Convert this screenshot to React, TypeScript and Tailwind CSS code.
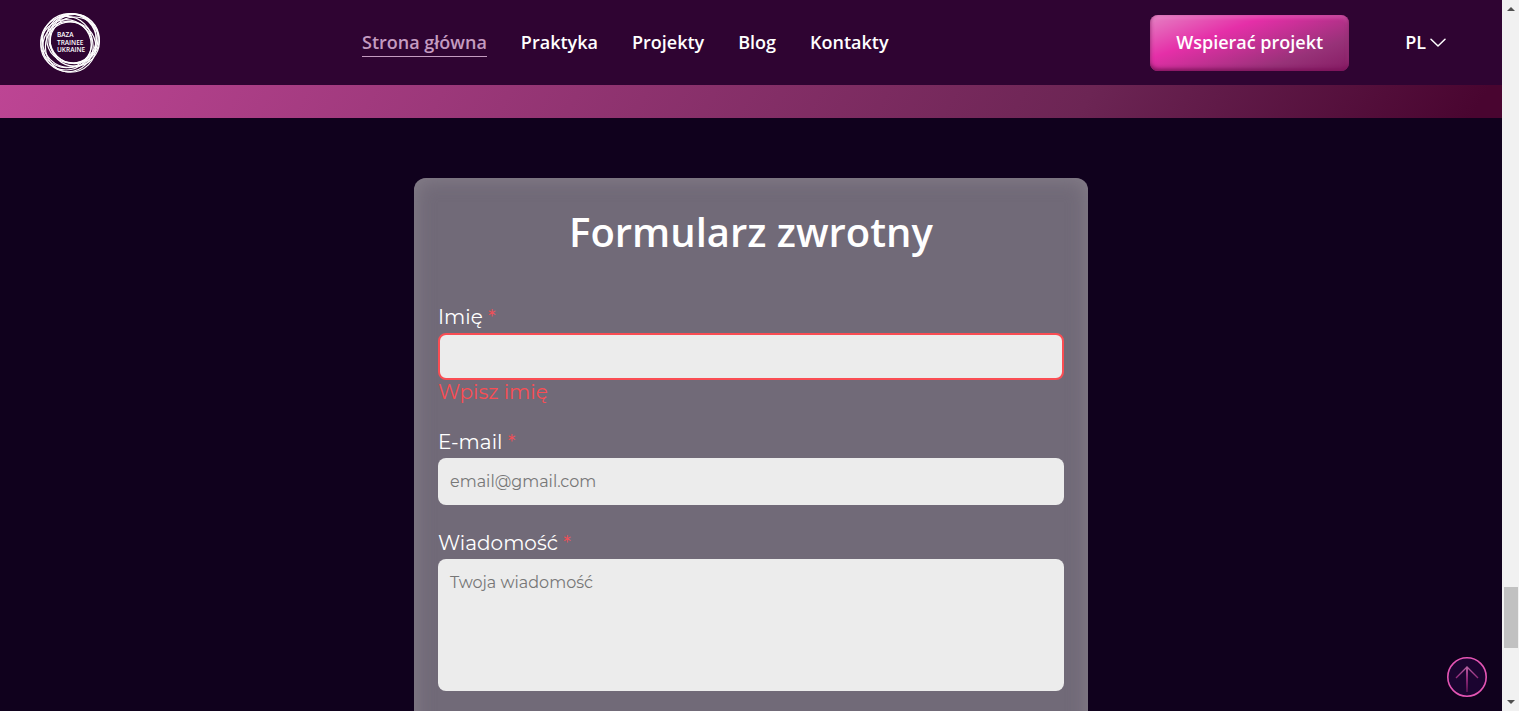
import type { ReactNode } from "react";

const navItems = ["Praktyka", "Projekty", "Blog", "Kontakty"];

const rings = [
  { cx: 34.6, cy: 26, r: 24.6 },
  { cx: 33.4, cy: 25.4, r: 24.6 },
  { cx: 31.5, cy: 25.4, r: 24.8 },
  { cx: 34.8, cy: 28.6, r: 24.6 },
  { cx: 29.4, cy: 27.6, r: 27 },
  { cx: 26.4, cy: 29, r: 25.6 },
  { cx: 26, cy: 31.8, r: 25.2 },
  { cx: 28, cy: 33.6, r: 25.2 },
  { cx: 30.6, cy: 34, r: 25.2 },
];

function Logo() {
  return (
    <a href="#home" aria-label="Baza Trainee Ukraine" className="block shrink-0">
      <svg width="60" height="60" viewBox="0 0 60 60" fill="none">
        {rings.map((ring, index) => (
          <circle key={index} {...ring} stroke="#fff" strokeWidth="1.2" />
        ))}
        <g
          fill="#fff"
          fontFamily="'Open Sans', sans-serif"
          fontWeight="600"
          fontSize="6.5"
        >
          <text x="17" y="24">BAZA</text>
          <text x="17" y="31.5">TRAINEE</text>
          <text x="17" y="39">UKRAINE</text>
        </g>
      </svg>
    </a>
  );
}

function Header() {
  return (
    <header className="flex h-[85px] shrink-0 items-center bg-[#2f0432] pr-14 pl-10 text-lg font-semibold text-white">
      <Logo />
      <nav className="ml-[262px] flex items-start gap-[34px]">
        <a
          href="#home"
          className="border-b border-[#c49bc0] leading-7 text-[#c49bc0]"
        >
          Strona główna
        </a>
        {navItems.map((item) => (
          <a key={item} href={`#${item.toLowerCase()}`} className="leading-7">
            {item}
          </a>
        ))}
      </nav>
      <button
        type="button"
        className="ml-auto h-14 rounded-lg bg-[linear-gradient(160deg,#e583c4_0%,#e52fa8_34%,#973278_75%,#861c64_100%)] px-[26px] pb-0.5 shadow-[inset_0_-2px_4px_#7a1058,inset_0_2px_4px_#f29bd466]"
      >
        Wspierać projekt
      </button>
      <button type="button" className="ml-14 flex items-center gap-1 pb-0.5">
        PL
        <svg width="16" height="10" viewBox="0 0 16 10" fill="none">
          <path
            d="M1 2.2 8 9l7-6.8"
            stroke="#fff"
            strokeWidth="1.5"
            strokeLinecap="round"
            strokeLinejoin="round"
          />
        </svg>
      </button>
    </header>
  );
}

function Label({ htmlFor, children }: { htmlFor: string; children: ReactNode }) {
  return (
    <label htmlFor={htmlFor} className="block pb-0.5 text-xl leading-7 text-white">
      {children} <span className="text-[#f04f57]">*</span>
    </label>
  );
}

function FeedbackForm() {
  return (
    <form
      noValidate
      className="mx-auto w-full max-w-[674px] rounded-xl bg-[#716a78] px-6 pt-6 pb-16 shadow-[inset_0_0_20px_#8d8690cc]"
    >
      <h2 className="text-center text-[40px] leading-[60px] font-semibold text-white">
        Formularz zwrotny
      </h2>
      <div className="mt-[41px] flex flex-col gap-6 font-['Montserrat','DejaVu_Sans',sans-serif]">
        <div>
          <Label htmlFor="name">Imię</Label>
          <input
            id="name"
            type="text"
            aria-invalid="true"
            aria-describedby="name-error"
            className="block h-[47px] w-full rounded-lg border-2 border-[#fa4d53] bg-[#ececec] px-3 text-base"
          />
          <p id="name-error" className="text-xl leading-6 text-[#fa4d53]">
            Wpisz imię
          </p>
        </div>
        <div>
          <Label htmlFor="email">E-mail</Label>
          <input
            id="email"
            type="email"
            placeholder="email@gmail.com"
            className="block h-[47px] w-full rounded-lg bg-[#ececec] px-3 text-base placeholder:text-[#777]"
          />
        </div>
        <div>
          <Label htmlFor="message">Wiadomość</Label>
          <textarea
            id="message"
            placeholder="Twoja wiadomość"
            className="block h-[132px] w-full resize-none rounded-lg bg-[#ececec] px-3 py-3 text-base leading-6 placeholder:text-[#777]"
          />
        </div>
      </div>
    </form>
  );
}

function BackToTop() {
  return (
    <a
      href="#home"
      aria-label="Do góry"
      className="absolute right-[15px] bottom-3.5"
    >
      <svg width="40" height="40" viewBox="0 0 40 40" fill="none">
        <defs>
          <linearGradient id="arrow" x1="0" y1="9" x2="0" y2="35" gradientUnits="userSpaceOnUse">
            <stop stopColor="#b965a4" />
            <stop offset="0.45" stopColor="#942b7d" />
            <stop offset="1" stopColor="#52104c" />
          </linearGradient>
        </defs>
        <circle cx="20" cy="20" r="19.2" fill="#1b0430" stroke="#e455b4" strokeWidth="1.6" />
        <path d="M19 10h2v25h-2z" fill="url(#arrow)" />
        <path d="M9 21 20 10l11 11" stroke="url(#arrow)" strokeWidth="1.4" />
      </svg>
    </a>
  );
}

function ScrollTrack() {
  return (
    <div
      aria-hidden="true"
      className="flex w-[17px] shrink-0 flex-col items-center bg-[#f1f1f1] py-[7px]"
    >
      <svg width="8" height="4" viewBox="0 0 8 4">
        <path d="M0 4 4 0l4 4z" fill="#505050" />
      </svg>
      <div className="grow-[575]" />
      <div className="h-[61px] w-[14px] bg-[#c1c1c1]" />
      <div className="grow-[52]" />
      <svg width="8" height="4" viewBox="0 0 8 4">
        <path d="M0 0h8L4 4z" fill="#505050" />
      </svg>
    </div>
  );
}

export default function App() {
  return (
    <div className="flex h-screen overflow-hidden bg-[#10011d] font-['Open_Sans',sans-serif]">
      <div className="relative flex min-w-0 grow flex-col overflow-hidden">
        <Header />
        <div className="h-[33px] shrink-0 bg-[linear-gradient(120deg,#bd4594_0%,#6c2554_72%,#490530_98%)]" />
        <main className="pt-[60px]">
          <FeedbackForm />
        </main>
        <BackToTop />
      </div>
      <ScrollTrack />
    </div>
  );
}
